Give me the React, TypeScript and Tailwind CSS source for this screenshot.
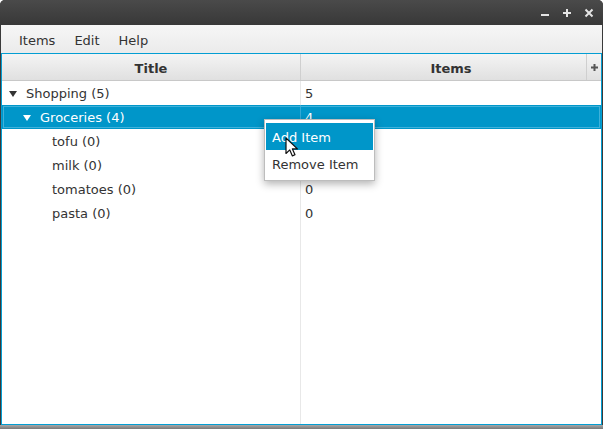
import React from "react";

type Row = {
    label: string;
    count: string;
    pad: number;
    expanded?: boolean;
    selected?: boolean;
};

const rows: Row[] = [
    { label: "Shopping (5)", count: "5", pad: 7, expanded: true },
    { label: "Groceries (4)", count: "4", pad: 21, expanded: true, selected: true },
    { label: "tofu (0)", count: "0", pad: 50 },
    { label: "milk (0)", count: "0", pad: 50 },
    { label: "tomatoes (0)", count: "0", pad: 50 },
    { label: "pasta (0)", count: "0", pad: 50 },
];

function Triangle({ color }: { color: string }) {
    return (
        <svg width="8" height="6" viewBox="0 0 8 6" className="mr-[9px] shrink-0">
            <path d="M0 0 L8 0 L4 6 Z" fill={color} />
        </svg>
    );
}

function TreeRow({ row }: { row: Row }) {
    const sel = row.selected;
    return (
        <div
            className={
                sel
                    ? "flex h-[24px] items-center bg-[#0096c9] text-white outline outline-1 -outline-offset-2 outline-[#3fb1da]"
                    : "flex h-[24px] items-center bg-white text-[#333333]"
            }
        >
            <div
                className={
                    sel
                        ? "flex h-full w-[299px] items-center border-r border-[#34a9d6] pt-[2px]"
                        : "flex h-full w-[299px] items-center border-r border-[#e8e8e8] pt-[2px]"
                }
                style={{ paddingLeft: row.pad }}
            >
                {row.expanded && <Triangle color={sel ? "#ffffff" : "#333333"} />}
                <span>{row.label}</span>
            </div>
            <div className="flex h-full flex-1 items-center pl-[4px] pt-[2px]">{row.count}</div>
        </div>
    );
}

function Cursor() {
    return (
        <svg width="14" height="21" viewBox="0 0 14 21" className="absolute left-[285px] top-[137px]">
            <path
                d="M1 1 L1 16.5 L4.8 12.9 L7.4 18.9 L10 17.8 L7.4 11.9 L12.4 11.9 Z"
                fill="#ffffff"
                stroke="#111111"
                strokeWidth="1.2"
                strokeLinejoin="round"
            />
        </svg>
    );
}

export default function App() {
    return (
        <div className="relative flex h-[429px] w-[603px] flex-col overflow-hidden rounded-t-[5px] bg-[#3a3a3a] font-['DejaVu_Sans',sans-serif] text-[13px]">
            <div className="flex h-[25px] shrink-0 items-center justify-end gap-[12px] bg-gradient-to-b from-[#4a4a4a] to-[#383838] pr-[9px]">
                <svg width="10" height="10" viewBox="0 0 10 10">
                    <path d="M1 7 H9" stroke="#e4e4e4" strokeWidth="2" />
                </svg>
                <svg width="10" height="10" viewBox="0 0 10 10">
                    <path d="M5 1 V9 M1 5 H9" stroke="#e4e4e4" strokeWidth="2" />
                </svg>
                <svg width="10" height="10" viewBox="0 0 10 10">
                    <path d="M1.5 1.5 L8.5 8.5 M8.5 1.5 L1.5 8.5" stroke="#e4e4e4" strokeWidth="2" />
                </svg>
            </div>

            <div className="mx-[1px] flex flex-1 flex-col bg-white">
                <div className="flex h-[28px] shrink-0 items-center gap-[19px] bg-gradient-to-b from-[#f6f6f6] to-[#ebebeb] pl-[18px] pt-[4px] text-[#333333]">
                    <span>Items</span>
                    <span>Edit</span>
                    <span>Help</span>
                </div>

                <div className="flex flex-1 flex-col border border-[#039ed3]">
                    <div className="relative flex h-[27px] shrink-0 items-center border-b border-[#c8c8c8] bg-gradient-to-b from-[#f4f4f4] to-[#e0e0e0] font-bold text-[#333333]">
                        <div className="flex h-full w-[299px] items-center justify-center border-r border-[#cfcfcf] pt-[3px]">
                            Title
                        </div>
                        <div className="flex h-full flex-1 items-center justify-center pt-[3px]">Items</div>
                        <div className="absolute right-0 top-0 flex h-full w-[15px] items-center justify-center border-l border-[#cfcfcf] bg-gradient-to-b from-[#f4f4f4] to-[#e0e0e0]">
                            <svg width="7" height="7" viewBox="0 0 7 7">
                                <path d="M3.5 0 V7 M0 3.5 H7" stroke="#555555" strokeWidth="2" />
                            </svg>
                        </div>
                    </div>

                    {rows.map((r) => (
                        <TreeRow key={r.label} row={r} />
                    ))}

                    <div className="flex flex-1">
                        <div className="w-[299px] border-r border-[#e8e8e8]" />
                        <div className="flex-1" />
                    </div>
                </div>
            </div>
            <div className="h-[4px] shrink-0 bg-gradient-to-b from-[#a8a8a8] to-[#7a7a7a]" />

            <div className="absolute left-[264px] top-[119px] w-[111px] border border-[#bdbdbd] bg-white px-[1px] pb-[3px] pt-[3px] text-[#333333] shadow-[0_3px_8px_rgba(0,0,0,0.3)]">
                <div className="flex h-[27px] items-center bg-[#0096c9] pl-[6px] pt-[2px] text-white">Add Item</div>
                <div className="flex h-[27px] items-center pl-[6px] pt-[2px]">Remove Item</div>
            </div>
            <Cursor />
        </div>
    );
}
